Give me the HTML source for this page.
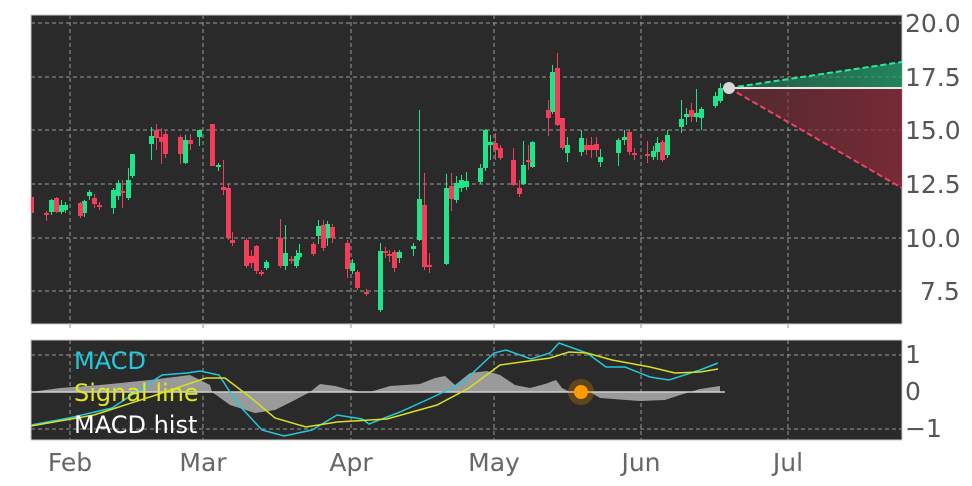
<!DOCTYPE html>
<html><head><meta charset="utf-8"><style>
html,body{margin:0;padding:0;background:#fff;}
svg{display:block;font-family:"DejaVu Sans","Liberation Sans",sans-serif;}
</style></head><body>
<svg width="972" height="486" viewBox="0 0 972 486" xmlns="http://www.w3.org/2000/svg">
<defs>
<linearGradient id="rg" x1="0" y1="0" x2="1" y2="0"><stop offset="0" stop-color="#7a2a35" stop-opacity="0.5"/><stop offset="1" stop-color="#8a2a38" stop-opacity="0.8"/></linearGradient>
<linearGradient id="gg" x1="0" y1="0" x2="1" y2="0"><stop offset="0" stop-color="#1f8a60" stop-opacity="0.5"/><stop offset="1" stop-color="#1f9a68" stop-opacity="0.8"/></linearGradient>
</defs>
<rect x="31" y="15" width="871" height="309" fill="#2a2a2a" stroke="#c8c8c8"/>
<g stroke="#9a9a9a" stroke-dasharray="4,3" stroke-width="1">
<line x1="31" x2="902" y1="23" y2="23"/><line x1="31" x2="902" y1="77" y2="77"/><line x1="31" x2="902" y1="130" y2="130"/><line x1="31" x2="902" y1="184" y2="184"/><line x1="31" x2="902" y1="238" y2="238"/><line x1="31" x2="902" y1="291" y2="291"/>
<line x1="70" x2="70" y1="15" y2="324"/><line x1="203" x2="203" y1="15" y2="324"/><line x1="351" x2="351" y1="15" y2="324"/><line x1="494" x2="494" y1="15" y2="324"/><line x1="641" x2="641" y1="15" y2="324"/><line x1="788" x2="788" y1="15" y2="324"/>
</g>
<g fill="#9a9a9a"><rect x="69.5" y="324" width="1" height="4"/><rect x="202.5" y="324" width="1" height="4"/><rect x="350.5" y="324" width="1" height="4"/><rect x="493.5" y="324" width="1" height="4"/><rect x="640.5" y="324" width="1" height="4"/><rect x="787.5" y="324" width="1" height="4"/></g>
<polygon points="729,88 902,88 902,188" fill="url(#rg)"/>
<polygon points="729,88 902,88 902,62" fill="url(#gg)"/>
<line x1="729" y1="88" x2="902" y2="88" stroke="#e8e8e8" stroke-width="2"/>
<line x1="729" y1="88" x2="902" y2="62" stroke="#2ee89a" stroke-width="2" stroke-dasharray="6,3"/>
<line x1="729" y1="88" x2="902" y2="188" stroke="#f0406a" stroke-width="2" stroke-dasharray="6,3"/>

<path stroke="#21e38a" stroke-width="1" fill="none" d="M51.5,199V215M61.5,200V214M65.5,202V213M84.5,200V217M89.5,190V200M113.5,188V214M118.5,180V200M128.5,168V200M132.5,154V178M151.5,127V160M185.5,135V164M199.5,130V146M218.5,163V171M266.5,260V270M285.5,225V270M296.5,250V268M299.5,244V260M318.5,220V244M327.5,221V246M352.5,259V274M380.5,243V312M399.5,250V263M413.5,243V256M419.5,110V241M446.5,174V265M456.5,176V203M461.5,175V192M466.5,172V190M480.5,164V184M485.5,129V171M490.5,135V160M523.5,141V185M532.5,141V168M552.5,65V114M567.5,137V162M581.5,130V156M600.5,149V167M618.5,138V166M624.5,130V145M653.5,146V160M657.5,137V160M667.5,130V158M681.5,100V133M686.5,108V125M696.5,89V122M701.5,107V130M715.5,92V108M720.5,83V103"/>
<path fill="#21e38a" d="M49,200h5v12h-5zM59,205h5v7h-5zM63,205h5v5h-5zM82,201h5v12h-5zM87,192h5v4h-5zM111,190h5v18h-5zM116,183h5v13h-5zM126,180h5v18h-5zM130,154h5v22h-5zM149,136h5v8h-5zM183,140h5v23h-5zM197,130h5v7h-5zM216,165h5v2h-5zM264,262h5v6h-5zM283,253h5v13h-5zM294,256h5v10h-5zM297,253h5v4h-5zM316,226h5v10h-5zM325,224h5v14h-5zM350,263h5v8h-5zM378,251h5v59h-5zM397,252h5v6h-5zM411,246h5v3h-5zM417,199h5v41h-5zM444,188h5v76h-5zM454,183h5v17h-5zM459,180h5v8h-5zM464,181h5v6h-5zM478,168h5v14h-5zM483,130h5v38h-5zM488,142h5v3h-5zM521,165h5v19h-5zM530,142h5v25h-5zM550,72h5v40h-5zM565,145h5v8h-5zM579,138h5v14h-5zM598,157h5v5h-5zM616,140h5v13h-5zM622,137h5v3h-5zM651,151h5v6h-5zM655,143h5v9h-5zM665,135h5v20h-5zM679,119h5v8h-5zM684,114h5v3h-5zM694,113h5v4h-5zM699,109h5v9h-5zM713,96h5v10h-5zM718,88h5v13h-5z"/>
<path stroke="#f23e5a" stroke-width="1" fill="none" d="M46.5,211V221M56.5,197V213M80.5,202V218M94.5,194V208M99.5,202V210M122.5,180V208M156.5,124V150M161.5,128V164M165.5,130V158M180.5,135V164M190.5,134V150M212.5,124V166M223.5,160V195M228.5,184V240M232.5,232V246M246.5,238V268M251.5,250V268M256.5,245V274M261.5,270V276M280.5,219V268M291.5,256V264M313.5,242V256M323.5,220V251M332.5,224V243M347.5,240V278M357.5,270V290M366.5,289V296M385.5,247V258M389.5,250V262M394.5,250V272M424.5,173V270M429.5,253V273M451.5,173V211M495.5,133V160M500.5,145V160M513.5,148V186M519.5,180V197M528.5,145V170M548.5,100V136M557.5,53V126M562.5,118V150M586.5,138V155M591.5,137V158M596.5,137V157M629.5,130V155M634.5,148V160M647.5,141V163M662.5,140V162M691.5,103V122"/>
<path fill="#f23e5a" d="M31,197h3v16h-3zM44,213h5v2h-5zM54,198h5v14h-5zM78,203h5v13h-5zM92,198h5v6h-5zM97,205h5v2h-5zM120,191h5v2h-5zM154,130h5v8h-5zM159,137h5v5h-5zM163,134h5v20h-5zM178,137h5v17h-5zM188,140h5v4h-5zM210,124h5v42h-5zM221,187h5v3h-5zM226,188h5v50h-5zM230,240h5v3h-5zM244,240h5v26h-5zM249,256h5v7h-5zM254,246h5v25h-5zM259,272h5v2h-5zM278,238h5v28h-5zM289,259h5v2h-5zM311,244h5v10h-5zM321,225h5v23h-5zM330,227h5v11h-5zM345,243h5v26h-5zM355,272h5v16h-5zM364,292h5v2h-5zM383,251h5v2h-5zM387,254h5v2h-5zM392,252h5v16h-5zM422,205h5v62h-5zM427,265h5v2h-5zM449,186h5v13h-5zM493,143h5v7h-5zM498,148h5v10h-5zM511,160h5v25h-5zM517,188h5v6h-5zM526,160h5v2h-5zM546,110h5v8h-5zM555,68h5v57h-5zM560,118h5v30h-5zM584,145h5v5h-5zM589,145h5v5h-5zM594,144h5v6h-5zM627,132h5v20h-5zM632,153h5v2h-5zM645,154h5v2h-5zM660,142h5v18h-5zM689,110h5v7h-5z"/>
<circle cx="729" cy="88" r="6" fill="#d8d8d8"/>
<g font-size="25" fill="#555">
<text x="905" y="32">20.0</text><text x="905" y="86">17.5</text><text x="905" y="139">15.0</text><text x="905" y="193">12.5</text><text x="905" y="247">10.0</text><text x="920" y="300">7.5</text>
</g>
<rect x="31" y="340" width="871" height="100" fill="#2a2a2a" stroke="#c8c8c8"/>
<g stroke="#9a9a9a" stroke-dasharray="4,3" stroke-width="1">
<line x1="31" x2="902" y1="355" y2="355"/><line x1="31" x2="902" y1="429" y2="429"/>
<line x1="70" x2="70" y1="340" y2="440"/><line x1="203" x2="203" y1="340" y2="440"/><line x1="351" x2="351" y1="340" y2="440"/><line x1="494" x2="494" y1="340" y2="440"/><line x1="641" x2="641" y1="340" y2="440"/><line x1="788" x2="788" y1="340" y2="440"/>
</g>
<path d="M31,392 L60,388 L100,385 L150,380 L190,375 L210,385 L212,392 Z M212,392 L230,405 L255,413 L275,410 L295,400 L310,392 Z M310,392 L320,384 L335,386 L350,390 L362,392 Z M370,392 L390,386 L420,384 L435,378 L445,376 L455,385 L470,373 L487,371 L500,375 L515,385 L530,388 L545,384 L556,380 L562,388 L570,392 Z M590,392 L600,398 L640,401 L665,400 L680,395 L690,392 Z M690,392 L700,389 L720,386 L720,392 Z" fill="#9a9a9a"/>
<line x1="31" y1="392" x2="725" y2="392" stroke="#cfcfcf" stroke-width="1.5"/>
<polyline fill="none" stroke="#22c8dc" stroke-width="1.5" points="31,425 69,418 112,408 162,375 187,373 200,371 219,375 237,403 262,430 284,436 312,430 337,415 362,419 369,424 400,412 431,398 462,383 494,353 506,350 531,359 550,353 559,343 587,353 606,367 625,367 650,377 669,380 700,370 718,363"/>
<polyline fill="none" stroke="#d8e020" stroke-width="1.5" points="31,426 94,415 156,395 206,378 225,378 250,397 275,418 306,427 337,422 387,419 437,405 469,388 500,365 550,358 569,352 587,353 612,360 650,367 675,373 700,372 718,369"/>
<circle cx="581" cy="392" r="13" fill="#ff9a00" opacity="0.25"/>
<circle cx="581" cy="392" r="7" fill="#ff9a00"/>
<g font-size="24">
<text x="74" y="369" fill="#22c8dc">MACD</text>
<text x="74" y="401" fill="#e0e820">Signal line</text>
<text x="74" y="433" fill="#fff">MACD hist</text>
</g>
<g font-size="25" fill="#555">
<text x="905" y="363">1</text><text x="905" y="400">0</text><text x="905" y="437">−1</text>
</g>
<g font-size="25" fill="#666" text-anchor="middle">
<text x="70" y="471">Feb</text><text x="203" y="471">Mar</text><text x="351" y="471">Apr</text><text x="494" y="471">May</text><text x="641" y="471">Jun</text><text x="788" y="471">Jul</text>
</g>
</svg>
</body></html>
